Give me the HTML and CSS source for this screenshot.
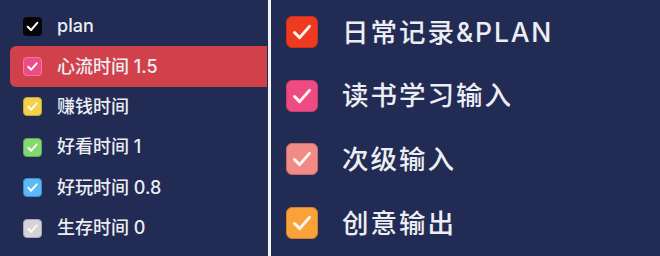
FILE: index.html
```html
<!DOCTYPE html>
<html lang="zh">
<head>
<meta charset="utf-8">
<link rel="stylesheet" href="styles.css">
</head>
<body>
<div class="page">
  <div class="left">
    <div class="row"><span class="cb c-black"><svg viewBox="0 0 18 18"><path d="M4.5 9.3 L7.6 12.4 L13.5 5.6"/></svg></span><span class="label">plan</span></div>
    <div class="row active"><span class="cb c-pink"><svg viewBox="0 0 18 18"><path d="M4.5 9.3 L7.6 12.4 L13.5 5.6"/></svg></span><span class="label">心流时间 1.5</span></div>
    <div class="row"><span class="cb c-yellow"><svg viewBox="0 0 18 18"><path d="M4.5 9.3 L7.6 12.4 L13.5 5.6"/></svg></span><span class="label">赚钱时间</span></div>
    <div class="row"><span class="cb c-green"><svg viewBox="0 0 18 18"><path d="M4.5 9.3 L7.6 12.4 L13.5 5.6"/></svg></span><span class="label">好看时间 1</span></div>
    <div class="row"><span class="cb c-blue"><svg viewBox="0 0 18 18"><path d="M4.5 9.3 L7.6 12.4 L13.5 5.6"/></svg></span><span class="label">好玩时间 0.8</span></div>
    <div class="row"><span class="cb c-gray"><svg viewBox="0 0 18 18"><path d="M4.5 9.3 L7.6 12.4 L13.5 5.6"/></svg></span><span class="label">生存时间 0</span></div>
  </div>
  <div class="divider"></div>
  <div class="right">
    <div class="rrow"><span class="rcb r-red"><svg viewBox="0 0 32 32"><path d="M8 16.5 L13.5 22 L24 10"/></svg></span><span class="rlabel">日常记录<span class="latin">&amp;PLAN</span></span></div>
    <div class="rrow"><span class="rcb r-pink"><svg viewBox="0 0 32 32"><path d="M8 16.5 L13.5 22 L24 10"/></svg></span><span class="rlabel">读书学习输入</span></div>
    <div class="rrow"><span class="rcb r-salmon"><svg viewBox="0 0 32 32"><path d="M8 16.5 L13.5 22 L24 10"/></svg></span><span class="rlabel">次级输入</span></div>
    <div class="rrow"><span class="rcb r-orange"><svg viewBox="0 0 32 32"><path d="M8 16.5 L13.5 22 L24 10"/></svg></span><span class="rlabel">创意输出</span></div>
  </div>
</div>
</body>
</html>
```

FILE: styles.css
```css
html, body {
  margin: 0;
  padding: 0;
  background: #222b53;
}
body {
  width: 660px;
  height: 256px;
  overflow: hidden;
  font-family: "Inter", "Noto Sans CJK SC", sans-serif;
  color: #eceef4;
}
.page {
  display: flex;
  width: 660px;
  height: 256px;
}
.left {
  width: 268px;
  padding-top: 6px;
  box-sizing: border-box;
}
.divider {
  width: 3px;
  background: #f3f4f8;
}
.right {
  flex: 1;
}
.row {
  height: 40.4px;
  display: flex;
  align-items: center;
  margin-left: 10px;
  padding-left: 13px;
  gap: 15px;
  box-sizing: border-box;
}
.row.active {
  background: #d1414b;
  border-radius: 6px 0 0 6px;
  margin-right: 1px;
}
.label {
  font-size: 18px;
  line-height: 1;
  font-weight: 500;
}
.cb {
  width: 19px;
  height: 19px;
  border-radius: 4px;
  display: flex;
  box-sizing: border-box;
}
.cb svg, .rcb svg {
  width: 100%;
  height: 100%;
}
.cb path {
  fill: none;
  stroke: #ffffff;
  stroke-width: 2;
  stroke-linecap: round;
  stroke-linejoin: round;
}
.c-black { background: #050507; }
.c-pink { background: #ee4a85; border: 1px solid #f57aa3; }
.c-yellow { background: #f2d04a; border: 1px solid #c9a83a; }
.c-green { background: #85d86f; border: 1px solid #5fae55; }
.c-blue { background: #5cb9f4; border: 1px solid #3e8fd0; }
.c-gray { background: #d4d3d7; border: 1px solid #a9a9b0; }
.c-yellow path, .c-green path, .c-gray path { stroke: #fbfbf4; }

.rrow {
  height: 63.7px;
  display: flex;
  align-items: center;
  padding-left: 15px;
  gap: 24px;
}
.rcb {
  width: 32px;
  height: 32px;
  border-radius: 6px;
  display: flex;
  box-sizing: border-box;
}
.rcb path {
  fill: none;
  stroke: #fff4ee;
  stroke-width: 3.2;
  stroke-linecap: round;
  stroke-linejoin: round;
}
.r-red { background: #ee3a20; border: 1.5px solid #c9301e; }
.r-pink { background: #ef4b83; border: 1.5px solid #c93c6c; }
.r-salmon { background: #f08b85; border: 1.5px solid #c96d6a; }
.r-orange { background: #f9a23a; border: 1.5px solid #cf8230; }
.rlabel {
  font-size: 26.5px;
  line-height: 1;
  letter-spacing: 2px;
  font-weight: 500;
}
.latin {
  letter-spacing: 1.8px;
}
```
